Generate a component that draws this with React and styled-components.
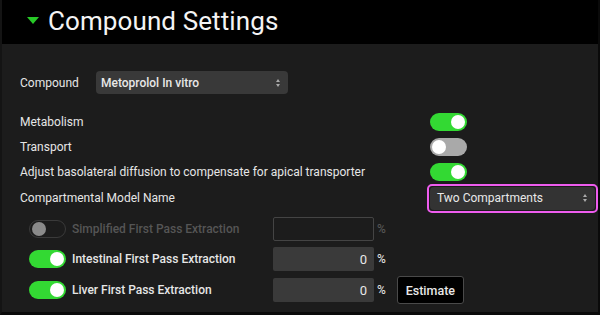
import styled, { createGlobalStyle } from "styled-components";

const Global = createGlobalStyle`
  html, body {
    margin: 0;
    padding: 0;
    background: #0d0d0d;
  }
  body {
    font-family: Roboto, "Liberation Sans", sans-serif;
  }
`;

const Frame = styled.div`
  width: 600px;
  height: 315px;
  box-sizing: border-box;
  border-right: 2px solid #0a0a0a;
  border-bottom: 3px solid #0a0a0a;
  border-left: 2px solid #141414;
  background: #1c1c1c;
  display: flex;
  flex-direction: column;
  overflow: hidden;
`;

const Header = styled.div`
  height: 44px;
  flex: none;
  background: #000;
  display: flex;
  align-items: center;
  gap: 9px;
  padding-left: 27px;
  margin-left: -2px;
`;

const Caret = styled.span`
  width: 0;
  height: 0;
  border-left: 6px solid transparent;
  border-right: 6px solid transparent;
  border-top: 7px solid #27c927;
  margin-top: -4px;
`;

const Title = styled.h1`
  margin: 0;
  margin-top: -2px;
  font-size: 26px;
  font-weight: 400;
  color: #f4f4f4;
  letter-spacing: 0.1px;
`;

const Body = styled.div`
  padding: 27px 0 0 18px;
  display: flex;
  flex-direction: column;
`;

const Label = styled.span`
  font-size: 12px;
  color: ${(p) => (p.$muted ? "#555" : "#e6e6e6")};
  white-space: nowrap;
`;

const CompoundRow = styled.div`
  display: flex;
  align-items: center;
  margin-bottom: 15px;
  ${Label} {
    width: 76px;
  }
`;

const SelectBox = styled.div`
  box-sizing: border-box;
  width: ${(p) => p.$width}px;
  height: ${(p) => p.$height}px;
  background: ${(p) => p.$bg};
  border-radius: 4px;
  display: flex;
  align-items: center;
  justify-content: space-between;
  padding: 0 8px 0 ${(p) => p.$pad}px;
  font-size: 12px;
  font-weight: ${(p) => p.$weight};
  color: #e8e8e8;
`;

const Arrows = styled.span`
  display: flex;
  flex-direction: column;
  gap: 2px;
  &::before,
  &::after {
    content: "";
    width: 0;
    height: 0;
    border-left: 2.5px solid transparent;
    border-right: 2.5px solid transparent;
  }
  &::before {
    border-bottom: 3px solid #aaa;
  }
  &::after {
    border-top: 3px solid #aaa;
  }
`;

const OptionRow = styled.div`
  display: flex;
  align-items: center;
  height: ${(p) => p.$h || 25}px;
  > ${Label} {
    width: 410px;
  }
`;

const Track = styled.span`
  box-sizing: border-box;
  display: inline-flex;
  align-items: center;
  width: 37px;
  height: 18px;
  border-radius: 9px;
  padding: 0 2px;
  flex: none;
  justify-content: ${(p) => (p.$on ? "flex-end" : "flex-start")};
  background: ${(p) =>
    p.$disabled ? "transparent" : p.$on ? "#33d933" : "#a9a9a9"};
  border: ${(p) => (p.$disabled ? "1px solid #3a3a3a" : "none")};
  &::after {
    content: "";
    width: 14px;
    height: 14px;
    border-radius: 50%;
    background: ${(p) => (p.$disabled ? "#8a8a8a" : "#fff")};
  }
`;

const Toggle = ({ on, disabled }) => <Track $on={on} $disabled={disabled} />;

const Highlight = styled.div`
  margin-left: -3px;
  border: 2px solid #ee5cee;
  border-radius: 5px;
  padding: 1px;
`;

const ExtractionList = styled.div`
  display: flex;
  flex-direction: column;
  margin-top: 1px;
  padding-left: 9px;
`;

const ExtractionRow = styled.div`
  display: flex;
  align-items: center;
  height: ${(p) => p.$h}px;
`;

const ExtractionName = styled(Label)`
  width: 201px;
  padding-left: 6px;
  font-weight: 500;
`;

const NumberField = styled.div`
  box-sizing: border-box;
  width: 101px;
  height: 24px;
  border-radius: 2px;
  background: ${(p) => (p.$empty ? "transparent" : "#3a3a3a")};
  border: ${(p) => (p.$empty ? "1px solid #444" : "none")};
  display: flex;
  align-items: center;
  justify-content: flex-end;
  padding-right: 7px;
  font-size: 13px;
  color: #e8e8e8;
`;

const Unit = styled.span`
  margin-left: 3px;
  font-size: 12px;
  font-weight: 500;
  color: ${(p) => (p.$muted ? "#555" : "#ddd")};
`;

const EstimateButton = styled.button`
  margin-left: 11px;
  width: 67px;
  height: 28px;
  background: #000;
  border: 1px solid #4a4a4a;
  border-radius: 3px;
  color: #e8e8e8;
  font-family: inherit;
  font-size: 12.5px;
  font-weight: 500;
  padding: 0;
`;

const extractions = [
  { name: "Simplified First Pass Extraction", disabled: true, value: "", h: 31 },
  { name: "Intestinal First Pass Extraction", on: true, value: "0", h: 30 },
  { name: "Liver First Pass Extraction", on: true, value: "0", h: 32, estimate: true },
];

export default function App() {
  return (
    <Frame>
      <Global />
      <Header>
        <Caret />
        <Title>Compound Settings</Title>
      </Header>
      <Body>
        <CompoundRow>
          <Label>Compound</Label>
          <SelectBox $width={192} $height={23} $bg="#393939" $pad={5} $weight={500}>
            Metoprolol In vitro
            <Arrows />
          </SelectBox>
        </CompoundRow>
        <OptionRow>
          <Label>Metabolism</Label>
          <Toggle on />
        </OptionRow>
        <OptionRow>
          <Label>Transport</Label>
          <Toggle />
        </OptionRow>
        <OptionRow>
          <Label>Adjust basolateral diffusion to compensate for apical transporter</Label>
          <Toggle on />
        </OptionRow>
        <OptionRow $h={28}>
          <Label>Compartmental Model Name</Label>
          <Highlight>
            <SelectBox $width={165} $height={23} $bg="#333" $pad={7} $weight={400}>
              Two Compartments
              <Arrows />
            </SelectBox>
          </Highlight>
        </OptionRow>
        <ExtractionList>
          {extractions.map((e) => (
            <ExtractionRow key={e.name} $h={e.h}>
              <Toggle on={e.on} disabled={e.disabled} />
              <ExtractionName $muted={e.disabled}>{e.name}</ExtractionName>
              <NumberField $empty={e.disabled}>{e.value}</NumberField>
              <Unit $muted={e.disabled}>%</Unit>
              {e.estimate && <EstimateButton>Estimate</EstimateButton>}
            </ExtractionRow>
          ))}
        </ExtractionList>
      </Body>
    </Frame>
  );
}
